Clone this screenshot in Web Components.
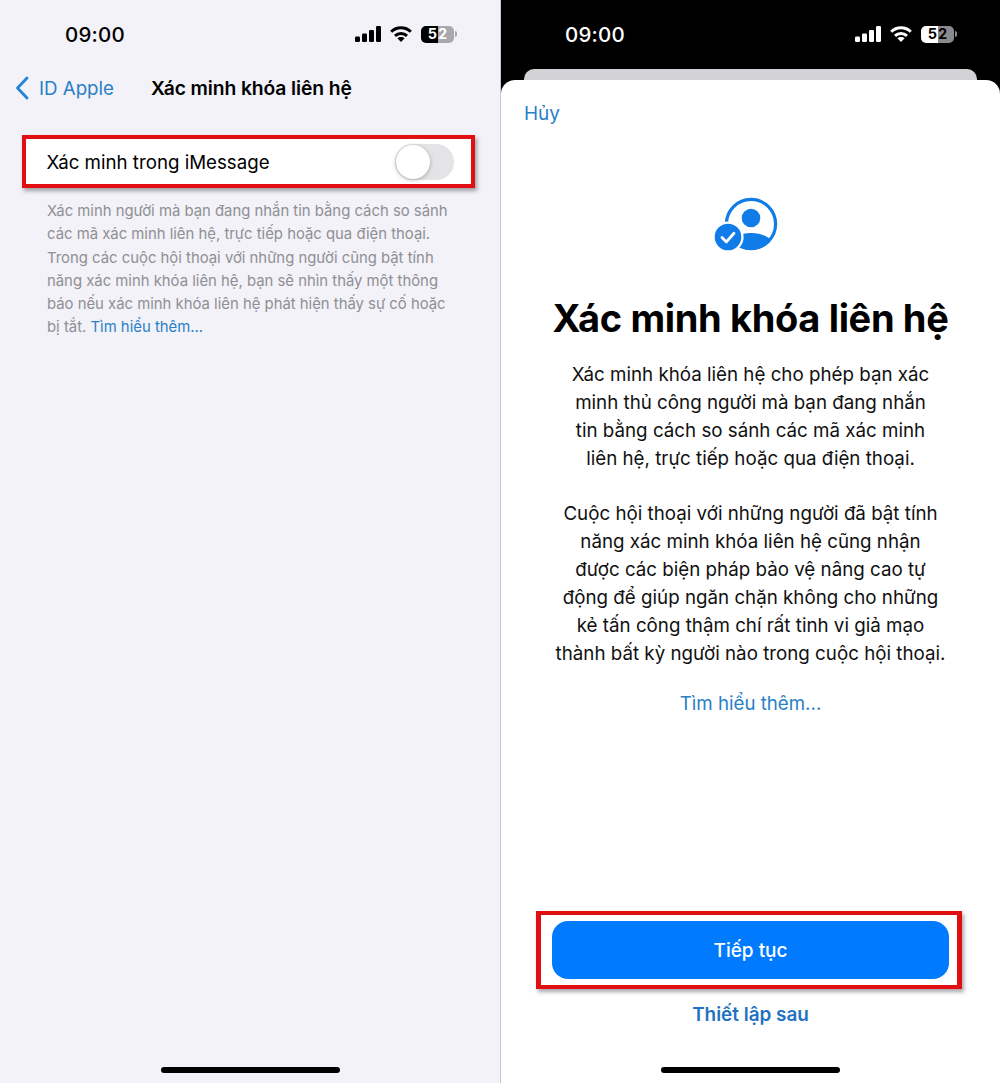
<!DOCTYPE html>
<html lang="vi">
<head>
<meta charset="utf-8">
<title>Xác minh khóa liên hệ</title>
<style>
  html, body { margin: 0; padding: 0; background: #fff; }
  body { font-family: Inter, "Noto Sans", "Liberation Sans", sans-serif; }
  .screens { display: flex; width: 1000px; height: 1083px; overflow: hidden; }
</style>
</head>
<body>
<div class="screens">
  <settings-screen></settings-screen>
  <intro-screen></intro-screen>
</div>

<script>
class StatusBar extends HTMLElement {
  constructor() {
    super();
    this.attachShadow({ mode: 'open' });
    this.shadowRoot.innerHTML = `
    <style>
      :host { display: flex; align-items: center; height: 68px; padding-left: var(--bar-pad, 65px); color: var(--bar-fg, #000); box-sizing: border-box; }
      .time { font-size: 20.5px; font-weight: 500; letter-spacing: .2px; width: 290px; }
      .icons { display: flex; align-items: center; }
      svg { display: block; }
      .wifi { margin-left: 9px; }
      .battery {
        margin-left: 9px; width: 33px; height: 17px; border-radius: 5px;
        background: linear-gradient(90deg, var(--bat-fill, #000) 52%, var(--bat-rest, #a9a9ad) 52%);
        display: flex; align-items: center; justify-content: center; gap: 1px;
        font-size: 14.5px; font-weight: 700; line-height: 1;
      }
      .five { color: var(--bat-five, #fff); }
      .two { color: var(--bat-two, #fff); }
      .cap { width: 2px; height: 6px; margin-left: 1px; border-radius: 0 2px 2px 0; background: var(--bat-rest, #a9a9ad); }
    </style>
    <span class="time">09:00</span>
    <div class="icons">
      <svg width="26" height="16" viewBox="0 0 26 16" fill="currentColor">
        <rect x="0" y="10.5" width="5" height="5.5" rx="1.2"/>
        <rect x="7" y="7.5" width="5" height="8.5" rx="1.2"/>
        <rect x="14" y="4" width="5" height="12" rx="1.2"/>
        <rect x="21" y="0" width="5" height="16" rx="1.2"/>
      </svg>
      <svg class="wifi" width="22" height="16" viewBox="0 0 22 16" fill="none" stroke="currentColor" stroke-width="3">
        <path d="M1.2 5.8C6.6.5 15.4.5 20.8 5.8"/>
        <path d="M5 9.8c3.4-3.2 8.6-3.2 12 0"/>
        <path d="M11 16l-3.6-3.7c2-1.9 5.2-1.9 7.2 0z" fill="currentColor" stroke="none"/>
      </svg>
      <div class="battery"><span class="five">5</span><span class="two">2</span></div>
      <div class="cap"></div>
    </div>`;
  }
}
customElements.define('status-bar', StatusBar);

class HomeIndicator extends HTMLElement {
  constructor() {
    super();
    this.attachShadow({ mode: 'open' });
    this.shadowRoot.innerHTML = `
    <style>
      :host { display: block; width: 179px; height: 6px; border-radius: 3px; background: #000; margin: auto auto 10px; }
    </style>`;
  }
}
customElements.define('home-indicator', HomeIndicator);

class ToggleSwitch extends HTMLElement {
  constructor() {
    super();
    this.attachShadow({ mode: 'open' });
    this.shadowRoot.innerHTML = `
    <style>
      :host { display: block; width: 59px; height: 36px; border-radius: 18px; background: #e4e4e6; padding: 1px; box-sizing: border-box; }
      .knob { width: 34px; height: 34px; border-radius: 50%; background: #fff; box-shadow: 0 1px 4px rgba(0,0,0,.28); }
    </style>
    <div class="knob"></div>`;
  }
}
customElements.define('toggle-switch', ToggleSwitch);

class SettingsScreen extends HTMLElement {
  constructor() {
    super();
    this.attachShadow({ mode: 'open' });
    this.shadowRoot.innerHTML = `
    <style>
      :host { display: flex; flex-direction: column; width: 500px; height: 1083px; background: #f2f2f8; flex: none; }
      .nav { display: flex; align-items: center; height: 40px; padding-left: 15px; }
      .back { display: flex; align-items: center; color: #2a80c6; font-size: 18.7px; width: 136px; }
      .back svg { margin-right: 10px; }
      .title { font-size: 19.3px; font-weight: 600; color: #000; letter-spacing: -.1px; }
      .row {
        display: flex; align-items: center; justify-content: space-between;
        margin: 27px 25px 0 22px; height: 53px; box-sizing: border-box;
        border: 4.5px solid #e10f12; background: #fff;
        padding: 0 17.5px 0 20.5px; box-shadow: 2px 3px 4px rgba(60,60,70,.45);
        font-size: 18.7px; color: #000;
      }
      .row span { margin-top: 1px; }
      .note { margin: 12px 0 0 47px; font-size: 14.87px; line-height: 23.3px; color: #8f8f94; white-space: nowrap; }
      a { color: #2a80c6; text-decoration: none; }
    </style>
    <status-bar></status-bar>
    <div class="nav">
      <div class="back">
        <svg width="14" height="24" viewBox="0 0 14 24" fill="none" stroke="#1f84dc" stroke-width="2.8" stroke-linecap="round" stroke-linejoin="round"><path d="M12 2 2.5 12 12 22"/></svg>
        ID Apple
      </div>
      <div class="title">Xác minh khóa liên hệ</div>
    </div>
    <div class="row"><span>Xác minh trong iMessage</span><toggle-switch></toggle-switch></div>
    <div class="note">
      Xác minh người mà bạn đang nhắn tin bằng cách so sánh<br>
      các mã xác minh liên hệ, trực tiếp hoặc qua điện thoại.<br>
      Trong các cuộc hội thoại với những người cũng bật tính<br>
      năng xác minh khóa liên hệ, bạn sẽ nhìn thấy một thông<br>
      báo nếu xác minh khóa liên hệ phát hiện thấy sự cố hoặc<br>
      bị tắt. <a>Tìm hiểu thêm...</a>
    </div>
    <home-indicator></home-indicator>`;
  }
}
customElements.define('settings-screen', SettingsScreen);

class IntroScreen extends HTMLElement {
  constructor() {
    super();
    this.attachShadow({ mode: 'open' });
    this.shadowRoot.innerHTML = `
    <style>
      :host {
        display: flex; flex-direction: column; width: 500px; height: 1083px; flex: none;
        background: #000; box-sizing: border-box; border-left: 1px solid #c9c9cc;
        --bar-fg: #fff; --bar-pad: 64px; --bat-fill: #fff; --bat-rest: #8a8a8c; --bat-five: #000; --bat-two: #000;
      }
      .behind { height: 11px; margin: 1px 23px 0 23px; background: #d2d2d7; border-radius: 10px 10px 0 0; flex: none; }
      .sheet { flex: 1; display: flex; flex-direction: column; align-items: center; background: #fff; border-radius: 14px 14px 0 0; }
      .cancel { align-self: flex-start; margin: 22px 0 0 23px; font-size: 19px; line-height: 24px; color: #2a80c6; }
      svg { display: block; margin-top: 68px; }
      h1 { margin: 38px 0 0; font-size: 38px; line-height: 52px; font-weight: 700; color: #000; letter-spacing: -.35px; white-space: nowrap; }
      p { margin: 0; font-size: 18.75px; line-height: 28px; text-align: center; color: #111; white-space: nowrap; }
      .first { margin-top: 17px; }
      .second { margin-top: 27px; }
      .more { margin-top: 22px; font-size: 18.7px; line-height: 28px; color: #2a80c6; }
      .cta {
        margin: 193px 0 0 -3px; width: 426px; height: 78px; box-sizing: border-box; flex: none;
        border: solid #e10f12; border-width: 4px 5px; box-shadow: 2px 3px 4px rgba(60,60,70,.45);
        padding: 6px 0 0 11px; background: #fff;
      }
      button {
        display: block; width: 397px; height: 58px; padding: 0; border: 0; border-radius: 16px; background: #007aff; color: #fff;
        font: 500 19px Inter, "Noto Sans", "Liberation Sans", sans-serif;
      }
      .later { margin-top: 13px; font-size: 18.9px; line-height: 26px; font-weight: 600; color: #1f72c0; }
    </style>
    <status-bar></status-bar>
    <div class="behind"></div>
    <div class="sheet">
      <div class="cancel">Hủy</div>
      <svg width="80" height="60" viewBox="0 0 80 60">
        <defs><clipPath id="disc"><circle cx="40" cy="30" r="26"/></clipPath></defs>
        <circle cx="40" cy="30" r="24.6" fill="none" stroke="#107ce8" stroke-width="3.2"/>
        <circle cx="40" cy="24" r="9.3" fill="#107ce8"/>
        <ellipse cx="40" cy="53" rx="23" ry="14" fill="#107ce8" clip-path="url(#disc)"/>
        <circle cx="17" cy="43" r="15.6" fill="#fff"/>
        <circle cx="17" cy="43" r="13.3" fill="#107ce8"/>
        <path d="M11 43.5l4.4 4.4 7.6-8.6" fill="none" stroke="#fff" stroke-width="2.8" stroke-linecap="round" stroke-linejoin="round"/>
      </svg>
      <h1>Xác minh khóa liên hệ</h1>
      <p class="first">
        Xác minh khóa liên hệ cho phép bạn xác<br>
        minh thủ công người mà bạn đang nhắn<br>
        tin bằng cách so sánh các mã xác minh<br>
        liên hệ, trực tiếp hoặc qua điện thoại.
      </p>
      <p class="second">
        Cuộc hội thoại với những người đã bật tính<br>
        năng xác minh khóa liên hệ cũng nhận<br>
        được các biện pháp bảo vệ nâng cao tự<br>
        động để giúp ngăn chặn không cho những<br>
        kẻ tấn công thậm chí rất tinh vi giả mạo<br>
        thành bất kỳ người nào trong cuộc hội thoại.
      </p>
      <div class="more">Tìm hiểu thêm...</div>
      <div class="cta"><button>Tiếp tục</button></div>
      <div class="later">Thiết lập sau</div>
      <home-indicator></home-indicator>
    </div>`;
  }
}
customElements.define('intro-screen', IntroScreen);
</script>
</body>
</html>
